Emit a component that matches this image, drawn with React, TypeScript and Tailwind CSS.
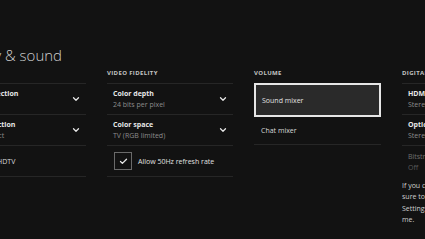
import { Check, ChevronDown } from 'lucide-react';

type Row = { title: string; sub?: string; chevron?: boolean };

function Header({ children }: { children: string }) {
  return (
    <div className="h-[15px] whitespace-nowrap text-[6px] font-bold leading-[10px] tracking-[0.06em] text-[#c4c4c4]">
      {children}
    </div>
  );
}

function SettingRow({ title, sub, chevron }: Row) {
  return (
    <div className="flex h-[31px] items-center justify-between border-b border-[#262626] pl-[6px] pr-[5px]">
      <div className="flex flex-col whitespace-nowrap">
        <span className="text-[7px] font-bold leading-[11px] text-[#e8e8e8]">{title}</span>
        {sub && <span className="text-[7px] leading-[11px] text-[#8c8c8c]">{sub}</span>}
      </div>
      {chevron && <ChevronDown className="h-[10px] w-[10px] text-[#e8e8e8]" strokeWidth={3} />}
    </div>
  );
}

export default function App() {
  return (
    <div
      className="h-[239px] w-[425px] overflow-hidden bg-[#121212] pt-[45px]"
      style={{ fontFamily: '"Open Sans", "Noto Sans", sans-serif' }}
    >
      <div className="ml-[-47px] mb-[-1px] h-[24px] whitespace-nowrap text-[15px] font-light leading-[20px] text-[#cfcfcf]">
        Display &amp; sound
      </div>

      <div className="ml-[-40px] flex gap-[21px]">
        {/* Video output */}
        <div className="w-[126px] shrink-0">
          <div className="ml-[-20px]">
            <Header>VIDEO</Header>
          </div>
          <div className="border-t border-[#262626]">
            <SettingRow title="Input selection" sub="1080p" chevron />
            <SettingRow title="TV connection" sub="Auto-detect" chevron />
            <div className="flex h-[31px] items-center border-b border-[#262626] pl-[6px]">
              <span className="whitespace-nowrap text-[7px] leading-[11px] text-[#d8d8d8]">Calibrate HDTV</span>
            </div>
          </div>
        </div>

        {/* Video fidelity */}
        <div className="w-[126px] shrink-0">
          <Header>VIDEO FIDELITY</Header>
          <div className="border-t border-[#262626]">
            <SettingRow title="Color depth" sub="24 bits per pixel" chevron />
            <SettingRow title="Color space" sub="TV (RGB limited)" chevron />
            <div className="flex h-[31px] items-center gap-[6px] border-b border-[#262626] pl-[7px]">
              <div className="flex h-[18px] w-[18px] items-center justify-center border border-[#6a6a6a]">
                <Check className="h-[9px] w-[9px] text-[#e8e8e8]" strokeWidth={3.5} />
              </div>
              <span className="whitespace-nowrap text-[7px] leading-[11px] text-[#e0e0e0]">
                Allow 50Hz refresh rate
              </span>
            </div>
          </div>
        </div>

        {/* Volume */}
        <div className="w-[127px] shrink-0">
          <Header>VOLUME</Header>
          <div className="flex h-[34px] items-center border-2 border-[#e6e6e6] bg-[#2a2a2a] pl-[6px]">
            <span className="text-[7px] leading-[11px] text-[#e0e0e0]">Sound mixer</span>
          </div>
          <div className="flex h-[28px] items-center border-b border-[#262626] pl-[7px]">
            <span className="text-[7px] leading-[11px] text-[#d8d8d8]">Chat mixer</span>
          </div>
        </div>

        {/* Digital audio */}
        <div className="w-[126px] shrink-0">
          <Header>DIGITAL AUDIO</Header>
          <div className="border-t border-[#262626]">
            <SettingRow title="HDMI audio" sub="Stereo uncompressed" />
            <SettingRow title="Optical audio" sub="Stereo uncompressed" />
            <div className="flex h-[31px] flex-col justify-center pl-[6px]">
              <span className="whitespace-nowrap text-[7px] leading-[11px] text-[#707070]">Bitstream format</span>
              <span className="text-[7px] leading-[11px] text-[#5a5a5a]">Off</span>
            </div>
            <p className="mt-[3px] whitespace-nowrap text-[7px] leading-[11.3px] text-[#d0d0d0]">
              If you can&apos;t hear anything, make
              <br />
              sure to check your audio
              <br />
              Settings, or ask someone to help
              <br />
              me.
            </p>
          </div>
        </div>
      </div>
    </div>
  );
}
